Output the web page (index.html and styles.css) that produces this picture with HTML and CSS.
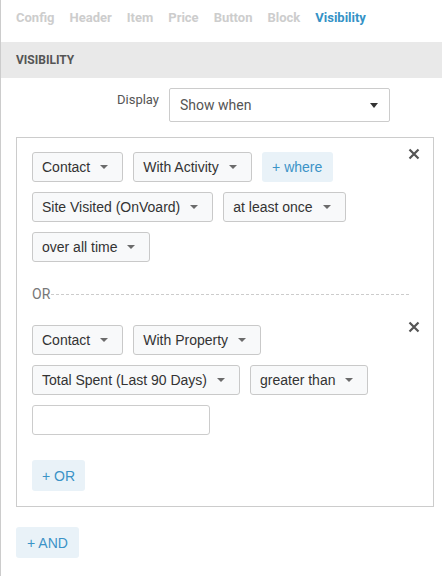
FILE: index.html
```html
<html>
  <head>
    <link rel="stylesheet" href="styles.css">
  </head>
  <body>
    <div class="panel">
      <nav class="tabs">
        <a href="#">Config</a>
        <a href="#">Header</a>
        <a href="#">Item</a>
        <a href="#">Price</a>
        <a href="#">Button</a>
        <a href="#">Block</a>
        <a href="#" class="active">Visibility</a>
      </nav>

      <div class="section-title">VISIBILITY</div>

      <div class="display-row">
        <label>Display</label>
        <div class="select">
          <span>Show when</span>
          <span class="caret caret-dark"></span>
        </div>
      </div>

      <div class="conditions">
        <div class="group">
          <button class="remove" title="Remove">
            <svg width="12" height="12" viewBox="0 0 12 12">
              <path d="M1.5 1.5 L10.5 10.5 M10.5 1.5 L1.5 10.5" stroke="#555" stroke-width="2.2" />
            </svg>
          </button>
          <div class="row">
            <button class="dd">Contact<span class="caret"></span></button>
            <button class="dd">With Activity<span class="caret"></span></button>
            <button class="btn-light btn-where">+ where</button>
          </div>
          <div class="row">
            <button class="dd">Site Visited (OnVoard)<span class="caret"></span></button>
            <button class="dd">at least once<span class="caret"></span></button>
          </div>
          <div class="row">
            <button class="dd">over all time<span class="caret"></span></button>
          </div>
        </div>

        <div class="or-sep"><span>OR</span></div>

        <div class="group">
          <button class="remove" title="Remove">
            <svg width="12" height="12" viewBox="0 0 12 12">
              <path d="M1.5 1.5 L10.5 10.5 M10.5 1.5 L1.5 10.5" stroke="#555" stroke-width="2.2" />
            </svg>
          </button>
          <div class="row">
            <button class="dd">Contact<span class="caret"></span></button>
            <button class="dd">With Property<span class="caret"></span></button>
          </div>
          <div class="row">
            <button class="dd">Total Spent (Last 90 Days)<span class="caret"></span></button>
            <button class="dd">greater than<span class="caret"></span></button>
          </div>
          <div class="row">
            <input type="text" class="value-input" />
          </div>
        </div>

        <button class="btn-light btn-or">+ OR</button>
      </div>

      <button class="btn-light btn-and">+ AND</button>
    </div>
  </body>
</html>
```

FILE: styles.css
```css
body {
  margin: 0;
  font-family: Roboto, "Liberation Sans", Arial, sans-serif;
  background-color: #fff;
  color: #333;
}
.panel {
  border-left: 1px solid #ccc;
  min-height: 576px;
  box-sizing: border-box;
}
.tabs {
  display: flex;
  gap: 15px;
  height: 42px;
  box-sizing: border-box;
  padding: 9px 15px 0;
}
.tabs a {
  font-size: 13px;
  font-weight: bold;
  line-height: 17px;
  color: #cdcdcd;
  text-decoration: none;
}
.tabs a.active {
  color: #3592c6;
}
.section-title {
  height: 36px;
  background-color: #e9e9e9;
  padding: 0 15px;
  display: flex;
  align-items: center;
  font-size: 12px;
  font-weight: bold;
  color: #555;
}
.display-row {
  display: flex;
  align-items: flex-start;
  margin-top: 10px;
  gap: 10px;
}
.display-row label {
  width: 158px;
  text-align: right;
  font-size: 13px;
  line-height: 18px;
  padding-top: 3px;
  color: #555;
}
.select {
  width: 221px;
  height: 34px;
  box-sizing: border-box;
  border: 1px solid #ccc;
  border-radius: 2px;
  padding: 0 11px 0 10px;
  display: flex;
  align-items: center;
  justify-content: space-between;
  font-size: 14px;
  color: #555;
}
.caret {
  display: inline-block;
  width: 0;
  height: 0;
  margin-left: 10px;
  border-left: 4px solid transparent;
  border-right: 4px solid transparent;
  border-top: 4px solid #6b6b6b;
}
.caret-dark {
  border-left-width: 4.5px;
  border-right-width: 4.5px;
  border-top: 5px solid #333;
  margin-top: 1px;
}
.conditions {
  margin: 15px 8px 0 15px;
  border: 1px solid #ccc;
  padding: 14px 14px 15px 15px;
}
.group {
  position: relative;
  display: flex;
  flex-direction: column;
  gap: 10px;
}
.row {
  display: flex;
  gap: 10px;
}
.remove {
  position: absolute;
  top: -4px;
  right: -1px;
  padding: 0;
  border: none;
  background: none;
  width: 12px;
  height: 12px;
  cursor: pointer;
}
.remove svg {
  display: block;
}
.dd {
  height: 30px;
  box-sizing: border-box;
  border: 1px solid #c9c9c9;
  border-radius: 3px;
  background-color: #f8f9fa;
  padding: 0 14px 0 9px;
  font-family: "Liberation Sans", Arial, sans-serif;
  font-size: 14px;
  color: #333;
  display: flex;
  align-items: center;
  cursor: pointer;
}
.btn-light {
  border: none;
  border-radius: 3px;
  background-color: #e9f2f8;
  color: #3b93c7;
  cursor: pointer;
  height: 31px;
  box-sizing: border-box;
}
.btn-where {
  height: 30px;
  width: 71px;
  font-family: "Liberation Sans", Arial, sans-serif;
  font-size: 14px;
}
.value-input {
  width: 178px;
  height: 30px;
  box-sizing: border-box;
  border: 1px solid #ccc;
  border-radius: 3px;
  padding: 0 8px;
}
.or-sep {
  display: flex;
  align-items: center;
  height: 22px;
  margin: 21px 10px 20px 0;
  font-size: 14px;
  color: #777;
}
.or-sep::after {
  content: "";
  flex: 1;
  border-top: 1px dashed #ccc;
  margin-left: 1px;
}
.btn-or {
  margin-top: 25px;
  width: 53px;
  font-size: 14px;
}
.btn-and {
  margin: 20px 0 0 15px;
  width: 63px;
  font-size: 14px;
}
```
